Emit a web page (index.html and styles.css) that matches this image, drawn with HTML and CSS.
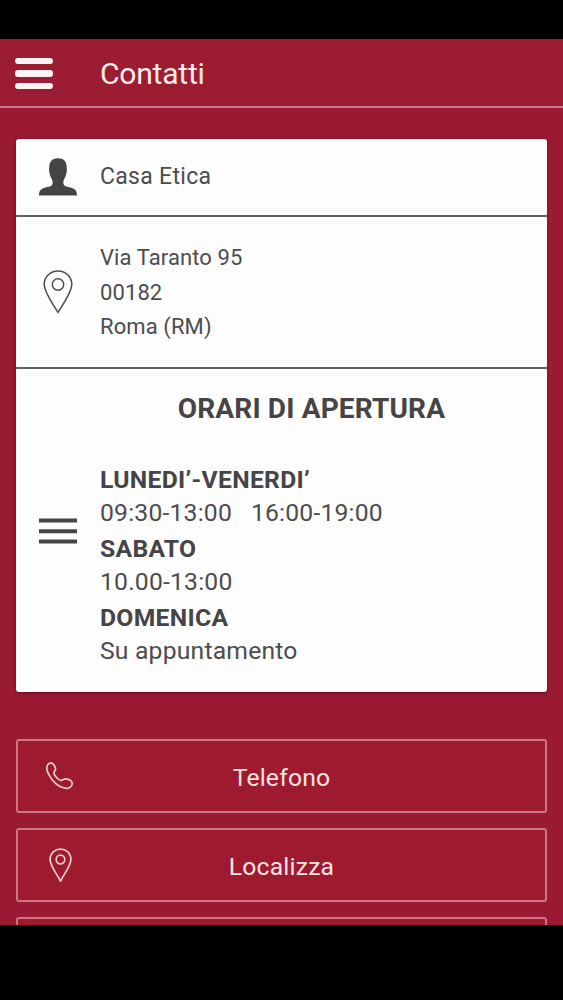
FILE: index.html
```html
<!DOCTYPE html>
<html lang="it">
<head>
    <meta charset="UTF-8">
    <title>Contatti</title>
    <link rel="stylesheet" href="styles.css">
</head>
<body>
    <div class="app">
        <header class="header">
            <button class="menu" aria-label="Menu">
                <span></span>
                <span></span>
                <span></span>
            </button>
            <h1>Contatti</h1>
        </header>

        <main class="content">
            <div class="card">
                <div class="row row-name">
                    <div class="icon">
                        <svg width="38" height="38" viewBox="0 0 38 38">
                            <path fill="#444345" d="M19 .3C24.500.3 27.600 3.500 27.700 8.500C28.500 13.500 27 18 25 21.500C24.300 23 24.200 24.500 24.500 26C25 28 27.500 28.600 30.500 29.300C35.500 30.500 38 32 38 37.500H0C0 32 2.500 30.500 7.500 29.300C10.500 28.600 13 28 13.500 26C13.800 24.500 13.700 23 13 21.500C11 18 9.500 13.500 10.300 8.500C10.400 3.500 13.500.3 19 .3z"/>
                        </svg>
                    </div>
                    <div class="text">Casa Etica</div>
                </div>
                <div class="row row-address">
                    <div class="icon">
                        <svg width="30" height="44" viewBox="0 0 30 44" fill="none" stroke="#4c4b4d" stroke-width="1.500">
                            <path d="M15 42.500C11 35.500 1.200 22.500 1.200 14.500C1.200 6.500 7.500 1 15 1s13.800 5.500 13.800 13.500C28.800 22.500 19 35.500 15 42.500z"/>
                            <circle cx="15" cy="14.500" r="5.700"/>
                        </svg>
                    </div>
                    <div class="text">Via Taranto 95<br>00182<br>Roma (RM)</div>
                </div>
                <div class="row row-hours">
                    <div class="icon">
                        <svg width="38" height="26" viewBox="0 0 38 26" fill="#444345">
                            <path d="M0 .5h38v4H0zM0 11.200h38v4H0zM0 21.500h38v4H0z"/>
                        </svg>
                    </div>
                    <div class="hours">
                        <h2>ORARI DI APERTURA</h2>
                        <dl>
                            <dt>LUNEDI’-VENERDI’</dt>
                            <dd>09:30-13:00 &nbsp; 16:00-19:00</dd>
                            <dt>SABATO</dt>
                            <dd>10.00-13:00</dd>
                            <dt>DOMENICA</dt>
                            <dd>Su appuntamento</dd>
                        </dl>
                    </div>
                </div>
            </div>

            <div class="buttons">
                <button class="btn">
                    <svg class="btn-icon" width="30" height="30" viewBox="0 0 30 30" fill="none" stroke="#f6ccd0" stroke-width="1.700">
                        <path d="M4 2.500C6 1.300 7.700 2 8.900 4L10.300 6.500C11.300 8.800 9.500 9.800 9 11.200C8.600 13 10.500 15.500 12.500 17.500C14 19 15.500 19.600 17 19.200C18.500 18.700 19.200 17.600 21.200 17.800C24 18 27.600 20 27.200 23C26.800 25.800 24 27.500 21.500 27.300C16.500 27 10.500 23 7 18.500C4 14.500 1.500 10 1.800 6.500C1.900 4.500 2.700 3.300 4 2.500z"/>
                    </svg>
                    <span>Telefono</span>
                </button>
                <button class="btn">
                    <svg class="btn-icon" width="30" height="34" viewBox="0 0 30 34" fill="none" stroke="#f6ccd0" stroke-width="1.700">
                        <path d="M15.500 33C12.500 27 5.100 18 5.100 11.500C5.100 5 10 1.200 15.500 1.200S25.900 5 25.900 11.500C25.900 18 18.500 27 15.500 33z"/>
                        <circle cx="15.500" cy="11.500" r="4.300"/>
                    </svg>
                    <span>Localizza</span>
                </button>
                <button class="btn" aria-label="Email"></button>
            </div>
        </main>
    </div>
</body>
</html>
```
FILE: styles.css
```css
* {
    box-sizing: border-box;
}
body {
    margin: 0;
    padding: 39px 0 75px;
    background: #000;
    font-family: Roboto, Arial, sans-serif;
    color: #4d4c4e;
}
h1, h2, dl, dd {
    margin: 0;
}
button {
    background: none;
    border: 0;
    padding: 0;
    font-family: inherit;
}
.app {
    height: 886px;
    overflow: hidden;
    background: #9b1a33;
}
.header {
    display: flex;
    align-items: center;
    height: 69px;
    padding: 2px 0 0 15px;
    background: #9c1c31;
    border-bottom: 2px solid #cd7584;
}
.menu {
    display: flex;
    flex-direction: column;
    gap: 6px;
    width: 38px;
    margin-right: 47px;
}
.menu span {
    height: 6.500px;
    border-radius: 3px;
    background: #fff4f2;
}
.header h1 {
    font-size: 30px;
    font-weight: 400;
    letter-spacing: -0.2px;
    color: #ffeceb;
    line-height: 36px;
}
.content {
    padding: 31px 16px 0;
}
.card {
    height: 553px;
    border-radius: 3px;
    background: #fefdfe;
    box-shadow: 0 1px 3px rgba(50, 0, 12, 0.6);
}
.row {
    display: flex;
    align-items: center;
}
.icon {
    display: flex;
    justify-content: center;
    width: 84px;
    flex-shrink: 0;
}
.text {
    font-size: 23px;
    letter-spacing: 0.3px;
}
.row-name {
    height: 78px;
    border-bottom: 2px solid #626063;
}
.row-name .text {
    margin-top: -2px;
}
.row-address {
    height: 152px;
    border-bottom: 2px solid #626063;
}
.row-address .text {
    padding-top: 2px;
    font-size: 22px;
    letter-spacing: 0.1px;
    line-height: 34.400px;
}
.row-hours {
    height: 323px;
}
.hours {
    flex: 1;
    align-self: stretch;
    padding-top: 22px;
}
.hours h2 {
    padding-right: 24px;
    font-size: 28px;
    font-weight: 700;
    letter-spacing: 0.15px;
    line-height: 36px;
    text-align: center;
    color: #454446;
}
.hours dl {
    padding-top: 35px;
    font-size: 24.700px;
    letter-spacing: 0.2px;
    line-height: 34.400px;
}
.hours dt {
    padding-top: 1px;
    line-height: 34.400px;
    margin-bottom: -1px;
    font-weight: 700;
    letter-spacing: 0.3px;
    color: #454446;
}
.buttons {
    display: flex;
    flex-direction: column;
    gap: 15px;
    padding-top: 47px;
}
.btn {
    position: relative;
    height: 74px;
    padding-top: 2px;
    border: 2px solid #cd7584;
    border-radius: 3px;
    background: #9e1b2f;
    color: #ffe3e2;
    font-size: 24.700px;
    letter-spacing: 0.2px;
}
.btn-icon {
    position: absolute;
    left: 27px;
    top: 50%;
    transform: translateY(-50%);
}
```
